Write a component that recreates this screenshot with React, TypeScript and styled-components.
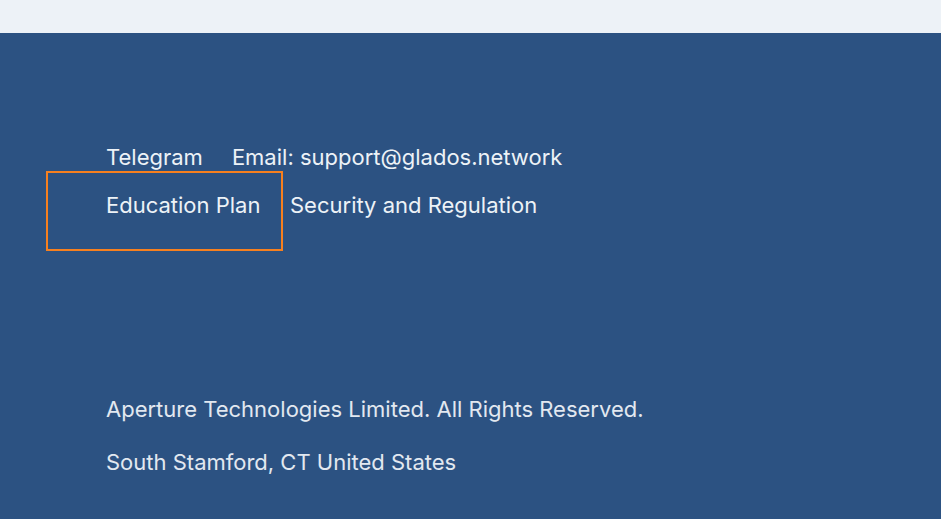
import styled, { createGlobalStyle } from "styled-components"

const GlobalStyle = createGlobalStyle`
	html, body {
		margin: 0;
		padding: 0;
		background: #2c5282;
	}
	body {
		font-family: Inter, "Noto Sans", "Liberation Sans", sans-serif;
		-webkit-font-smoothing: antialiased;
	}
`

const TopBar = styled.div`
	height: 33px;
	background: #edf2f7;
`

const Footer = styled.footer`
	background: #2c5282;
	padding: 112px 0 60px 106px;
	min-height: 486px;
	box-sizing: border-box;
`

const LinkRow = styled.div`
	display: flex;
	align-items: flex-start;
	gap: 29px;
`

const FooterLink = styled.a<{ $offset?: number }>`
	display: block;
	color: #edf2f7;
	font-size: 22px;
	line-height: 24px;
	text-decoration: none;
	white-space: nowrap;
	padding-top: ${(p) => p.$offset ?? 0}px;
`

const HighlightBox = styled.div`
	margin-left: -60px;
	margin-top: 2px;
	margin-right: -22px;
	width: 237px;
	height: 80px;
	box-sizing: border-box;
	border: 2px solid #f7801f;
	padding: 20px 0 0 58px;
`

const Legal = styled.div`
	margin-top: 146px;
	display: flex;
	flex-direction: column;
	gap: 29px;
`

const LegalLine = styled.p`
	margin: 0;
	color: #e2e8f0;
	font-size: 22px;
	line-height: 24px;
`

export default function App() {
	return (
		<>
			<GlobalStyle />
			<TopBar />
			<Footer>
				<LinkRow>
					<FooterLink href="#">Telegram</FooterLink>
					<FooterLink href="#">Email: support@glados.network</FooterLink>
				</LinkRow>
				<LinkRow>
					<HighlightBox>
						<FooterLink href="#">Education Plan</FooterLink>
					</HighlightBox>
					<FooterLink href="#" $offset={24}>
						Security and Regulation
					</FooterLink>
				</LinkRow>
				<Legal>
					<LegalLine>Aperture Technologies Limited. All Rights Reserved.</LegalLine>
					<LegalLine>South Stamford, CT United States</LegalLine>
				</Legal>
			</Footer>
		</>
	)
}
